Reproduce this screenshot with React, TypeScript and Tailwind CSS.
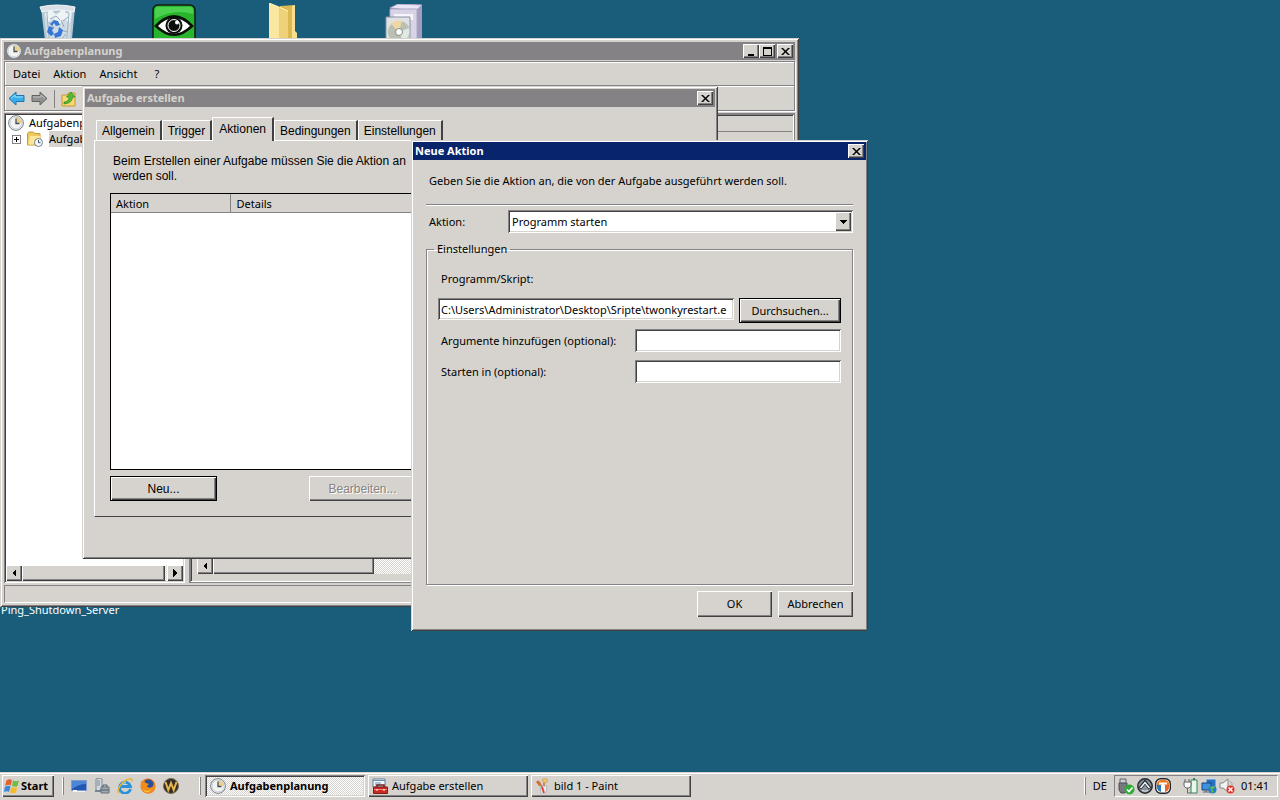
import { ReactNode } from "react";

const raised =
  "bg-[#d6d3ce] shadow-[inset_1px_1px_0_#fff,inset_-1px_-1px_0_#424142,inset_-2px_-2px_0_#848284]";
const sunken =
  "shadow-[inset_1px_1px_0_#848284,inset_-1px_-1px_0_#fff,inset_2px_2px_0_#424142,inset_-2px_-2px_0_#d6d3ce]";
const frame =
  "bg-[#d6d3ce] shadow-[inset_1px_1px_0_#d6d3ce,inset_-1px_-1px_0_#424142,inset_2px_2px_0_#fff,inset_-2px_-2px_0_#848284]";
const checker =
  "bg-[repeating-conic-gradient(#ffffff_0_25%,#d6d3ce_0_50%)] bg-[length:2px_2px]";

const ClockIcon = () => (
  <svg width="16" height="16" viewBox="0 0 16 16" className="shrink-0">
    <circle cx="8" cy="8" r="7.4" fill="#f3f3f0" stroke="#75808a" />
    <path d="M8 8V1.8A6.2 6.2 0 0 1 14.2 8Z" fill="#ecd28a" />
    <circle cx="8" cy="8" r="6" fill="none" stroke="#c6d0da" />
    <path d="M8 3.5V8.5H11.5" fill="none" stroke="#3f4f66" strokeWidth="1.3" />
  </svg>
);

const TreeFolderIcon = () => (
  <svg width="16" height="16" viewBox="0 0 16 16" className="shrink-0">
    <path d="M.5 14V2.5L2 1h4.500l1 1.500h5.500V14Z" fill="#f0c95e" stroke="#c79a38" />
    <path d="M1 13.500 3 5h10.500L12 13.500Z" fill="#fbe596" />
    <circle cx="11.500" cy="11.500" r="4" fill="#f5f8fa" stroke="#718394" />
    <path d="M11.500 9v2.700h2" fill="none" stroke="#3f4f66" />
  </svg>
);

const RecycleBinIcon = () => (
  <svg width="38" height="46" viewBox="0 0 38 46">
    <path d="M2 4 36 4 32 45H7Z" fill="#b4c6d4" />
    <path d="M5 9 33 9 30 45H9Z" fill="#cfdbe4" />
    <path d="m6 10 6-5 5 6 7-6 4 5 5-4-2 13-6-4-5 6-6-7-5 5Z" fill="#eef3f6" />
    <path d="m11 15 6-3 4 4m3 1 5-4m-8 13 8 2m-7 8 5-6m-17-12 5 6m7-8 3 7" stroke="#93a9bb" fill="none" />
    <path d="M8 5v5l3 34m19-35-3 35" stroke="#9fb3c3" fill="none" />
    <path d="M1 3q17-4 35 0l-1 5Q19 4 3 8Z" fill="#d9e1e7" stroke="#f5f8fa" />
    <path d="m11 20 4-4 4 1 2 4-4 1-2-3-2 3Zm-3 8 2-6 5 2-2 2 2 4-3 2Zm8 6-1-4 4-2 1-5 4 3-2 6Z" fill="#3676d6" />
  </svg>
);

const EyeIcon = () => (
  <svg width="44" height="44" viewBox="0 0 44 44">
    <rect x="1" y="1" width="42" height="42" rx="5" fill="#28b52d" stroke="#111b12" strokeWidth="1.500" />
    <path d="M3 15V6q0-3 3-3h32q3 0 3 3v4Q21 4 3 15Z" fill="#4cd04f" />
    <path d="M2 22Q22 0 42 22Q22 42 2 22Z" fill="#081008" />
    <path d="M6 22Q22 6 38 22Q22 37 6 22Z" fill="#fff" />
    <circle cx="22" cy="21.500" r="8.500" fill="#0b0f0b" />
    <circle cx="22" cy="21.500" r="6" fill="none" stroke="#fff" strokeWidth="1" />
    <circle cx="25" cy="18.500" r="2" fill="#fff" />
  </svg>
);

const FolderIcon = () => (
  <svg width="32" height="44" viewBox="0 0 32 44">
    <path d="m13 3 15-1v28h2v14H13Z" fill="#dcb850" />
    <path d="M28 2v26l2 2v14h-5V3Z" fill="#f7df8d" />
    <path d="m2 0 10 4v40H2Z" fill="#fbe8a0" />
    <path d="m12 4 9 4v36h-9Z" fill="#eed179" />
    <path d="M2 0 12 4 21 8" fill="none" stroke="#fff4bf" />
  </svg>
);

const SetupIcon = () => (
  <svg width="38" height="44" viewBox="0 0 38 44">
    <path d="m5 4 8-4 24 1-5 6Z" fill="#e9e4f7" stroke="#b3a8cb" />
    <path d="m31 6 6-5v34l-6 8Z" fill="#a49bc0" />
    <path d="M5 5h27v39H5Z" fill="#d8d4e6" stroke="#aea5c4" />
    <path d="M9 10h19v6H9Z" fill="#f7f5fc" />
    <path d="M1 13h24v31H1Z" fill="#dfe1e4" stroke="#8a91a0" />
    <circle cx="14" cy="28" r="11" fill="#b9bfb2" />
    <path d="M14 28 6 20q4-5 11-3Z" fill="#eed7a1" />
    <path d="m14 28 10-4q2 9-6 13Z" fill="#dfe9e6" />
    <circle cx="14" cy="28" r="3.500" fill="#fff" stroke="#898c84" />
  </svg>
);

const BackIcon = () => (
  <svg width="17" height="15" viewBox="0 0 17 15">
    <path d="M1 7.500 8 1v3.500h8v6H8V14Z" fill="#39aeea" stroke="#1d76b4" />
    <path d="M3 7.500 7 4v2h8" fill="none" stroke="#9ae1ff" />
  </svg>
);

const ForwardIcon = () => (
  <svg width="17" height="15" viewBox="0 0 17 15">
    <path d="M16 7.500 9 1v3.500H1v6h8V14Z" fill="#929291" stroke="#626262" />
    <path d="M2 6h8V4l4 3.500" fill="none" stroke="#bebebe" />
  </svg>
);

const UpFolderIcon = () => (
  <svg width="16" height="16" viewBox="0 0 16 16">
    <path d="M1 15V4h5l1-2h7v13Z" fill="#f8d870" stroke="#c69838" />
    <path d="M3 11q5 0 5-5H5.500L10 1l4 5h-2.500q0 6-8.500 7Z" fill="#52bd35" stroke="#2b8425" strokeWidth=".7" />
  </svg>
);

const StartLogo = () => (
  <svg width="16" height="16" viewBox="0 0 16 16">
    <path d="M2.500 2.500Q5 .5 8 2L6.700 7.500Q4 6 1 8Z" fill="#e95d2b" />
    <path d="M9 2.500Q12 4 15 2.500L13.500 8Q11 9 8 8Z" fill="#75b843" />
    <path d="M.8 9Q4 7 6.500 8.500L5 14Q3 12.500 0 14Z" fill="#3d87d7" />
    <path d="M7.500 9Q10 10.500 13.200 9L12 14.500Q9 16 6 14.500Z" fill="#f5bb27" />
  </svg>
);

const ShowDesktopIcon = () => (
  <svg width="16" height="16" viewBox="0 0 16 16">
    <path d="M.5 2.500h15v10H.5Z" fill="#2356b3" stroke="#819bc6" />
    <path d="M1 3h14v3Q8 6 1 11Z" fill="#4c86d7" />
    <path d="M2 13.500h12" stroke="#eef1f6" />
    <path d="M2 12.500h4" stroke="#fff" />
  </svg>
);

const ServerManagerIcon = () => (
  <svg width="16" height="16" viewBox="0 0 16 16">
    <path d="m2 1 4-1 2 1v10l-4 2-2-1Z" fill="#d2d9df" stroke="#7e8990" />
    <path d="M3 3h3M3 5h3M3 7h3" stroke="#778996" />
    <path d="M1 13h7" stroke="#78868f" strokeWidth="2" />
    <path d="M7 9h8v6H7Z" fill="#9facb6" stroke="#65717b" />
    <path d="M9 9V7h4v2M7 12h8" fill="none" stroke="#515c67" />
  </svg>
);

const IeIcon = () => (
  <svg width="16" height="16" viewBox="0 0 16 16">
    <path d="M13.500 11A5.500 5.500 0 1 1 13.500 8.500H4" fill="none" stroke="#2c91d8" strokeWidth="2.800" />
    <path d="M4 7.500Q5 4.500 9 4.500" stroke="#a7e0fb" fill="none" />
    <path d="M2.500 15Q-1 14 3 8T12.500 1Q16 0 14.500 4" fill="none" stroke="#efb52a" strokeWidth="1.400" />
  </svg>
);

const FirefoxIcon = () => (
  <svg width="16" height="16" viewBox="0 0 16 16">
    <circle cx="8" cy="8" r="7.500" fill="#e27117" />
    <circle cx="8.500" cy="6.500" r="5" fill="#294f9b" />
    <path d="M1 3q2 1 3-1 0 2 2 3l3 1-2 2q1 3 5 1 2-1 2-5 3 6-1 10-4 3-9 0Q0 11 1 3Z" fill="#f08b1c" />
    <path d="M3 11q4 4 9 0-3 5-8 2Z" fill="#fdca3d" />
  </svg>
);

const WinampIcon = () => (
  <svg width="16" height="16" viewBox="0 0 16 16">
    <circle cx="8" cy="8" r="7.500" fill="#342d23" stroke="#756b58" />
    <path d="m2.500 4 2.800 8L8 5l2.700 7 2.800-8" fill="none" stroke="#e7b64e" strokeWidth="2" />
  </svg>
);

const ToolboxIcon = () => (
  <svg width="17" height="16" viewBox="0 0 17 16">
    <path d="M1 1h12v8H1Z" fill="#f5f8fb" stroke="#64819b" />
    <path d="M1 2.500h12M3 5h6M3 7h5" stroke="#688eb3" />
    <path d="M5 10V7h7v3" fill="none" stroke="#68221e" strokeWidth="1.500" />
    <path d="M1.500 9h14v6.500h-14Z" fill="#cc2922" stroke="#79201d" />
    <path d="M2 11.500h13" stroke="#f28375" />
    <path d="M5 11v2m7-2v2" stroke="#fff" />
  </svg>
);

const PaintIcon = () => (
  <svg width="16" height="16" viewBox="0 0 16 16">
    <path d="M5 8h7l-1 8H6Z" fill="#e6ebf0" stroke="#b2bac2" />
    <path d="M9 8V4M7 9 4 4" stroke="#bf7934" strokeWidth="1.500" />
    <path d="M7 2q2-3 5-1 2 2-1 4-4 0-4-3Z" fill="#efc27a" stroke="#c99650" strokeWidth=".6" />
    <path d="M1 4q2-3 4 0l1 3-2 1Z" fill="#dc6b38" />
    <path d="m7 9 2 6" stroke="#de4430" strokeWidth="2" />
  </svg>
);

const UsbIcon = () => (
  <svg width="17" height="17" viewBox="0 0 17 17">
    <path d="M2 1h6v5H2Z" fill="#c9ccd0" stroke="#606368" />
    <path d="M1 5h8v7l-2 3H3l-2-3Z" fill="#77797c" stroke="#4d5053" />
    <circle cx="11.500" cy="11.500" r="5" fill="#2fac3a" />
    <path d="m9 11.500 2 2 3.500-4" fill="none" stroke="#fff" strokeWidth="1.600" />
  </svg>
);

const DiscIcon = () => (
  <svg width="16" height="16" viewBox="0 0 16 16">
    <circle cx="8" cy="8" r="7.200" fill="#8a9098" stroke="#272c34" strokeWidth="1.500" />
    <path d="M3 10.500 8 4l5 6.500" fill="none" stroke="#272c34" strokeWidth="3.400" />
    <path d="M3.500 10 8 4.500 12.500 10" fill="none" stroke="#fff" strokeWidth="1.400" />
    <path d="M5 12.500q3 1.500 6 0" stroke="#e4e7ea" fill="none" />
  </svg>
);

const TunerIcon = () => (
  <svg width="16" height="16" viewBox="0 0 16 16">
    <rect x=".7" y=".7" width="14.600" height="14.600" rx="5" fill="#fff" stroke="#20252b" strokeWidth="1.400" />
    <path d="M2 5q1-3 4-3h4q3 0 4 3v2H2Z" fill="#ef7920" />
    <path d="M2 7h4v7q-4-1-4-5Z" fill="#2f78b8" />
    <path d="M10 7h4v2q0 4-4 5Z" fill="#e7642b" />
    <path d="M4 5.500h8M8 5v9" stroke="#fff" strokeWidth="2.200" />
  </svg>
);

const PowerIcon = () => (
  <svg width="16" height="16" viewBox="0 0 16 16">
    <path d="M8 2h6v13H8Z" fill="#e8f9e9" stroke="#38815a" />
    <path d="M10 1h2" stroke="#38815a" strokeWidth="2" />
    <path d="M2 1v4m4-4v4" stroke="#62676b" />
    <path d="M1 4h7v4l-2 2H3L1 8Z" fill="#f7f7f7" stroke="#62676b" />
    <path d="M4.500 10v5H8" fill="none" stroke="#62676b" />
  </svg>
);

const NetworkIcon = () => (
  <svg width="16" height="16" viewBox="0 0 16 16">
    <path d="M5 1h10v8H5Z" fill="#2670c1" stroke="#d1dcea" />
    <path d="M1 5h9v7H1Z" fill="#3e91df" stroke="#1a417c" />
    <path d="M2 14h7m-4-2v2" stroke="#5a6573" />
    <circle cx="11.500" cy="11.500" r="4" fill="#247bc8" />
    <path d="m9 9 4-1 1 2-3 1 2 3-2 1Z" fill="#61b84b" />
  </svg>
);

const MutedIcon = () => (
  <svg width="16" height="16" viewBox="0 0 16 16">
    <path d="M1 5h3l5-4v13l-5-4H1Z" fill="#f1f2f2" stroke="#85888a" />
    <path d="M11 3q3 2 2 5" fill="none" stroke="#a0a3a5" />
    <circle cx="11.500" cy="11.500" r="4" fill="#e1382b" />
    <path d="m9.500 9.500 4 4m0-4-4 4" stroke="#fff" strokeWidth="1.300" />
  </svg>
);

const Arrow = ({ dir }: { dir: "left" | "right" | "down" }) => (
  <svg width="8" height="8" viewBox="0 0 8 8" shapeRendering="crispEdges">
    {dir === "left" && <path d="M6 0v8L2 4Z" />}
    {dir === "right" && <path d="M2 0v8l4-4Z" />}
    {dir === "down" && <path d="M0 2h8L4 6Z" />}
  </svg>
);

const captionGlyphs = {
  Minimieren: <path d="M1 7h6v2H1Z" />,
  Maximieren: <path d="M0 0h9v9H0ZM1 2v6h7V2Z" fillRule="evenodd" />,
  Schließen: <path d="M0 1h2l2.500 2.500L7 1h2L5.500 4.500 9 8H7L4.500 5.500 2 8H0l3.500-3.500Z" />,
};

const CaptionButton = ({ name }: { name: keyof typeof captionGlyphs }) => (
  <button aria-label={name} className={`flex h-[14px] w-4 items-center justify-center ${raised}`}>
    <svg width="9" height="9" viewBox="0 0 9 9">
      {captionGlyphs[name]}
    </svg>
  </button>
);

const TitleBar = ({
  title,
  active,
  icon,
  children,
}: {
  title: string;
  active?: boolean;
  icon?: ReactNode;
  children: ReactNode;
}) => (
  <header
    className={`flex h-[18px] shrink-0 items-center gap-[2px] px-[2px] text-[11px] font-bold ${
      active ? "bg-[#08246b] text-white" : "bg-[#848284] text-[#d6d3ce]"
    }`}
  >
    {icon}
    <h2 className="flex-1">{title}</h2>
    {children}
  </header>
);

const ScrollBar = ({ thumb }: { thumb: string }) => (
  <div className={`flex h-4 w-full ${checker}`}>
    <button aria-label="Nach links" className={`flex w-4 items-center justify-center ${raised}`}>
      <Arrow dir="left" />
    </button>
    <div className={`${thumb} ${raised}`} />
    <button aria-label="Nach rechts" className={`ml-auto flex w-4 items-center justify-center ${raised}`}>
      <Arrow dir="right" />
    </button>
  </div>
);

const SchedulerWindow = () => (
  <section className={`absolute top-[38px] left-0 flex h-[569px] w-[799px] flex-col p-1 ${frame}`}>
    <TitleBar title="Aufgabenplanung" icon={<ClockIcon />}>
      <div className="flex">
        <CaptionButton name="Minimieren" />
        <CaptionButton name="Maximieren" />
      </div>
      <CaptionButton name="Schließen" />
    </TitleBar>
    <div className="mt-[1px] border border-[#848284] shadow-[inset_1px_1px_0_#fff,1px_1px_0_#fff]">
      <nav className="flex h-6 items-center gap-[13px] border-b border-[#848284] px-2">
        <button>Datei</button>
        <button>Aktion</button>
        <button>Ansicht</button>
        <button className="pl-1">?</button>
      </nav>
      <div className="flex h-6 items-center gap-[6px] border-t border-white px-[3px]">
        <button aria-label="Zurück"><BackIcon /></button>
        <button aria-label="Vorwärts"><ForwardIcon /></button>
        <div className="h-[18px] border-l border-[#848284]" />
        <button aria-label="Nach oben"><UpFolderIcon /></button>
      </div>
    </div>
    <div className="mt-[2px] flex flex-1 gap-1">
      <div className={`flex w-[181px] flex-col bg-white p-[2px] ${sunken}`}>
        <div className="flex h-4 items-center gap-[5px] pl-[2px]">
          <ClockIcon />
          Aufgabenp
        </div>
        <div className="flex h-4 items-center gap-[6px] pl-[6px]">
          <span className="flex h-[9px] w-[9px] items-center justify-center border border-[#848284]">
            <svg width="5" height="5" viewBox="0 0 5 5">
              <path d="M0 2h5v1H0ZM2 0h1v5H2Z" />
            </svg>
          </span>
          <TreeFolderIcon />
          <span className="flex-1 bg-[#d6d3ce]">Aufgab</span>
        </div>
        <div className="mt-auto">
          <ScrollBar thumb="w-[143px]" />
        </div>
      </div>
      <div className={`flex flex-1 flex-col border border-[#848284] p-[2px] ${sunken}`}>
        <div className="h-4 border-b border-[#848284]" />
        <div className="mt-auto mb-[6px] px-[5px]">
          <ScrollBar thumb="w-[161px]" />
        </div>
      </div>
    </div>
    <footer className="mt-[2px] h-[18px] border border-[#848284] border-r-white border-b-white" />
  </section>
);

const tabs = ["Allgemein", "Trigger", "Aktionen", "Bedingungen", "Einstellungen"];

const CreateTaskWindow = () => (
  <section className={`absolute top-[86px] left-[82px] flex h-[473px] w-[636px] flex-col p-[3px] ${frame}`}>
    <TitleBar title="Aufgabe erstellen">
      <CaptionButton name="Schließen" />
    </TitleBar>
    <div
      role="tablist"
      className="flex h-[33px] shrink-0 items-end pl-[11px] font-['Liberation_Sans',sans-serif] text-xs"
    >
      {tabs.map((tab) => (
        <button
          key={tab}
          role="tab"
          aria-selected={tab === "Aktionen"}
          className={
            tab === "Aktionen"
              ? "relative z-10 -mb-[1px] h-6 border-t border-l border-white border-r-2 border-r-[#424142] bg-[#d6d3ce] px-[6px] pb-[1px]"
              : "h-5 border-t border-l border-white border-r-2 border-r-[#424142] px-[5px]"
          }
        >
          {tab}
        </button>
      ))}
    </div>
    <div className="mx-[9px] mb-[39px] flex flex-1 flex-col border border-white border-r-[#424142] border-b-[#424142] px-[15px] pt-[13px] pb-[15px]">
      <p className="pl-[3px] font-['Liberation_Sans',sans-serif] text-xs leading-[15px]">
        Beim Erstellen einer Aufgabe müssen Sie die Aktion an
        <br />
        werden soll.
      </p>
      <div className="mt-[9px] flex-1 border border-black bg-white">
        <table className="w-full table-fixed border-collapse text-left">
          <thead>
            <tr className="h-[18px] border-b border-[#848284] bg-[#d6d3ce]">
              <th className="w-[119px] border-r border-[#848284] pt-[2px] pl-[5px] font-normal">Aktion</th>
              <th className="border-l border-white pt-[2px] pl-[6px] font-normal">Details</th>
            </tr>
          </thead>
          <tbody />
        </table>
      </div>
      <div className="mt-[6px] flex gap-[92px] font-['Liberation_Sans',sans-serif] text-xs">
        <button className={`h-[25px] w-[107px] border border-black ${raised}`}>Neu...</button>
        <button disabled className={`h-[25px] w-[107px] text-[#848284] [text-shadow:1px_1px_0_#fff] ${raised}`}>
          Bearbeiten...
        </button>
      </div>
    </div>
  </section>
);

const NewActionWindow = () => (
  <section className={`absolute top-[140px] left-[411px] flex h-[491px] w-[457px] flex-col p-[2px] ${frame}`}>
    <TitleBar title="Neue Aktion" active>
      <CaptionButton name="Schließen" />
    </TitleBar>
    <div className="flex flex-1 flex-col px-[13px] pb-3">
      <p className="mt-[13px] pl-[3px] leading-4">
        Geben Sie die Aktion an, die von der Aufgabe ausgeführt werden soll.
      </p>
      <hr className="mt-[15px] h-[2px] border-t border-b border-t-[#848284] border-b-white" />
      <div className="mt-1 flex items-center pl-[3px]">
        <label htmlFor="action" className="w-[79px]">
          Aktion:
        </label>
        <div className="relative flex-1">
          <select
            id="action"
            className={`block h-[23px] w-full appearance-none bg-white px-1 ${sunken}`}
          >
            <option>Programm starten</option>
          </select>
          <span
            className={`pointer-events-none absolute top-[2px] right-[2px] flex h-[19px] w-4 items-center justify-center ${raised}`}
          >
            <Arrow dir="down" />
          </span>
        </div>
      </div>
      <fieldset className="mt-2 flex-1 border border-[#848284] px-[11px] shadow-[1px_1px_0_#fff,inset_1px_1px_0_#fff]">
        <legend className="-ml-[4px] px-[3px] leading-4">Einstellungen</legend>
        <label htmlFor="program" className="mt-[14px] block pl-[3px] leading-4">
          Programm/Skript:
        </label>
        <div className="mt-[11px] flex items-start gap-[5px]">
          <input
            id="program"
            defaultValue="C:\Users\Administrator\Desktop\Sripte\twonkyrestart.e"
            className={`h-[22px] min-w-0 flex-1 bg-white px-[3px] ${sunken}`}
          />
          <button className={`h-[25px] w-[102px] border border-black ${raised}`}>Durchsuchen...</button>
        </div>
        <div className="mt-[6px] flex items-center pl-[3px]">
          <label htmlFor="args" className="w-[194px]">
            Argumente hinzufügen (optional):
          </label>
          <input id="args" className={`h-[23px] min-w-0 flex-1 bg-white px-[3px] ${sunken}`} />
        </div>
        <div className="mt-2 flex items-center pl-[3px]">
          <label htmlFor="start-in" className="w-[194px]">
            Starten in (optional):
          </label>
          <input id="start-in" className={`h-[23px] min-w-0 flex-1 bg-white px-[3px] ${sunken}`} />
        </div>
      </fieldset>
      <div className="mt-[6px] flex justify-end gap-[6px]">
        <button className={`h-[26px] w-[75px] ${raised}`}>OK</button>
        <button className={`h-[26px] w-[75px] ${raised}`}>Abbrechen</button>
      </div>
    </div>
  </section>
);

const quickLaunch = [
  { name: "Desktop anzeigen", icon: <ShowDesktopIcon /> },
  { name: "Server-Manager", icon: <ServerManagerIcon /> },
  { name: "Internet Explorer", icon: <IeIcon /> },
  { name: "Firefox", icon: <FirefoxIcon /> },
  { name: "Winamp", icon: <WinampIcon /> },
];

const Grip = () => <div className="h-[18px] w-[2px] border-r border-l border-r-[#848284] border-l-white" />;

const Taskbar = () => (
  <footer className="flex h-7 items-center border-t border-[#d6d3ce] bg-[#d6d3ce] px-[2px] pb-[1px] shadow-[inset_0_1px_0_#fff]">
    <button className={`flex h-[22px] w-[52px] items-center gap-[1px] pl-[2px] text-[11px] font-bold ${raised}`}>
      <StartLogo />
      Start
    </button>
    <div className="ml-2 flex items-center gap-[7px]">
      <Grip />
      {quickLaunch.map((item) => (
        <button key={item.name} aria-label={item.name}>
          {item.icon}
        </button>
      ))}
    </div>
    <div className="ml-5 flex items-center gap-1">
      <Grip />
      <div className="flex gap-[3px]">
        <button className={`flex h-[22px] w-[160px] items-center gap-1 pl-[5px] font-bold ${checker} ${sunken}`}>
          <ClockIcon />
          Aufgabenplanung
        </button>
        <button className={`flex h-[22px] w-[160px] items-center gap-[3px] pl-1 ${raised}`}>
          <ToolboxIcon />
          Aufgabe erstellen
        </button>
        <button className={`flex h-[22px] w-[160px] items-center gap-[3px] pl-1 ${raised}`}>
          <PaintIcon />
          bild 1 - Paint
        </button>
      </div>
    </div>
    <div className="ml-auto flex items-center gap-[7px]">
      <Grip />
      <span>DE</span>
      <div className="flex h-[22px] w-[164px] items-center border border-[#848284] border-r-white border-b-white pl-[3px]">
        <div className="flex gap-[2px]">
          <UsbIcon />
          <DiscIcon />
          <TunerIcon />
        </div>
        <div className="ml-3 flex gap-[2px]">
          <PowerIcon />
          <NetworkIcon />
          <MutedIcon />
        </div>
        <time className="ml-auto pr-2">01:41</time>
      </div>
    </div>
  </footer>
);

const App = () => {
  return (
    <div className="flex min-h-screen cursor-default flex-col overflow-hidden bg-[#195d7b] font-['Noto_Sans',sans-serif] text-[11px] leading-4 whitespace-nowrap text-black">
      <main className="relative flex-1">
        <div className="absolute top-1 left-[39px]"><RecycleBinIcon /></div>
        <div className="absolute top-1 left-[152px]"><EyeIcon /></div>
        <div className="absolute top-[3px] left-[267px]"><FolderIcon /></div>
        <div className="absolute top-1 left-[385px]"><SetupIcon /></div>
        <span className="absolute top-[602px] left-[1px] text-white">Ping_Shutdown_Server</span>
        <SchedulerWindow />
        <CreateTaskWindow />
        <NewActionWindow />
      </main>
      <Taskbar />
    </div>
  );
};

export default App;
